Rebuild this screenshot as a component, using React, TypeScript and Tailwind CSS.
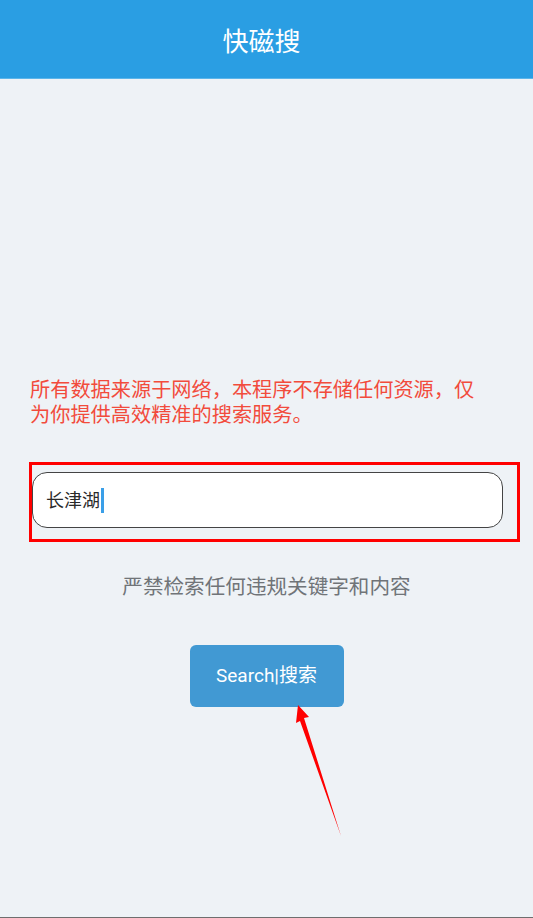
export default function App() {
  return (
    <div className="relative flex min-h-[918px] flex-col bg-[#eef2f6] font-['Roboto','Noto_Sans_CJK_SC',sans-serif]">
      {/* Title bar */}
      <header className="flex h-[79px] items-center justify-center border-b border-[#5cb5ea] bg-[#2a9ee3] pr-[10px] pt-[7px]">
        <h1 className="text-[26px] text-white">快磁搜</h1>
      </header>

      <main className="flex flex-1 flex-col border-b border-[#6e6e6e] pt-[299px]">
        <p className="ml-[30px] w-[455px] text-[20.2px] leading-[25px] text-[#f24b3c]">
          所有数据来源于网络，本程序不存储任何资源，仅为你提供高效精准的搜索服务。
        </p>

        {/* Search box (with red highlight frame) */}
        <div className="ml-[29px] mt-[34px] w-[491px] border-[3px] border-[#ff0000] pb-[11px] pl-0 pr-[14px] pt-[7px]">
          <div className="flex h-[56px] items-center rounded-[15px] border border-[#444] bg-white pl-[13px]">
            <span className="text-[18px] text-[#2a2a2a]">长津湖</span>
            <span className="ml-px h-[25px] w-[3px] bg-[#3a9fe8]" />
          </div>
        </div>

        <p className="mt-[31px] text-center text-[20.6px] leading-[28px] text-[#707478]">
          严禁检索任何违规关键字和内容
        </p>

        <div className="mt-[44px] flex justify-center">
          <button className="h-[62px] w-[154px] rounded-[6px] bg-[#4199d3] text-[19px] text-white">
            Search|搜索
          </button>
        </div>
      </main>

      {/* Annotation arrow */}
      <svg className="pointer-events-none absolute left-0 top-0" width="533" height="918">
        <polygon points="298,705 309,717 304,718 341,836 300,721 296,723" fill="#ff0000" />
      </svg>
    </div>
  );
}
